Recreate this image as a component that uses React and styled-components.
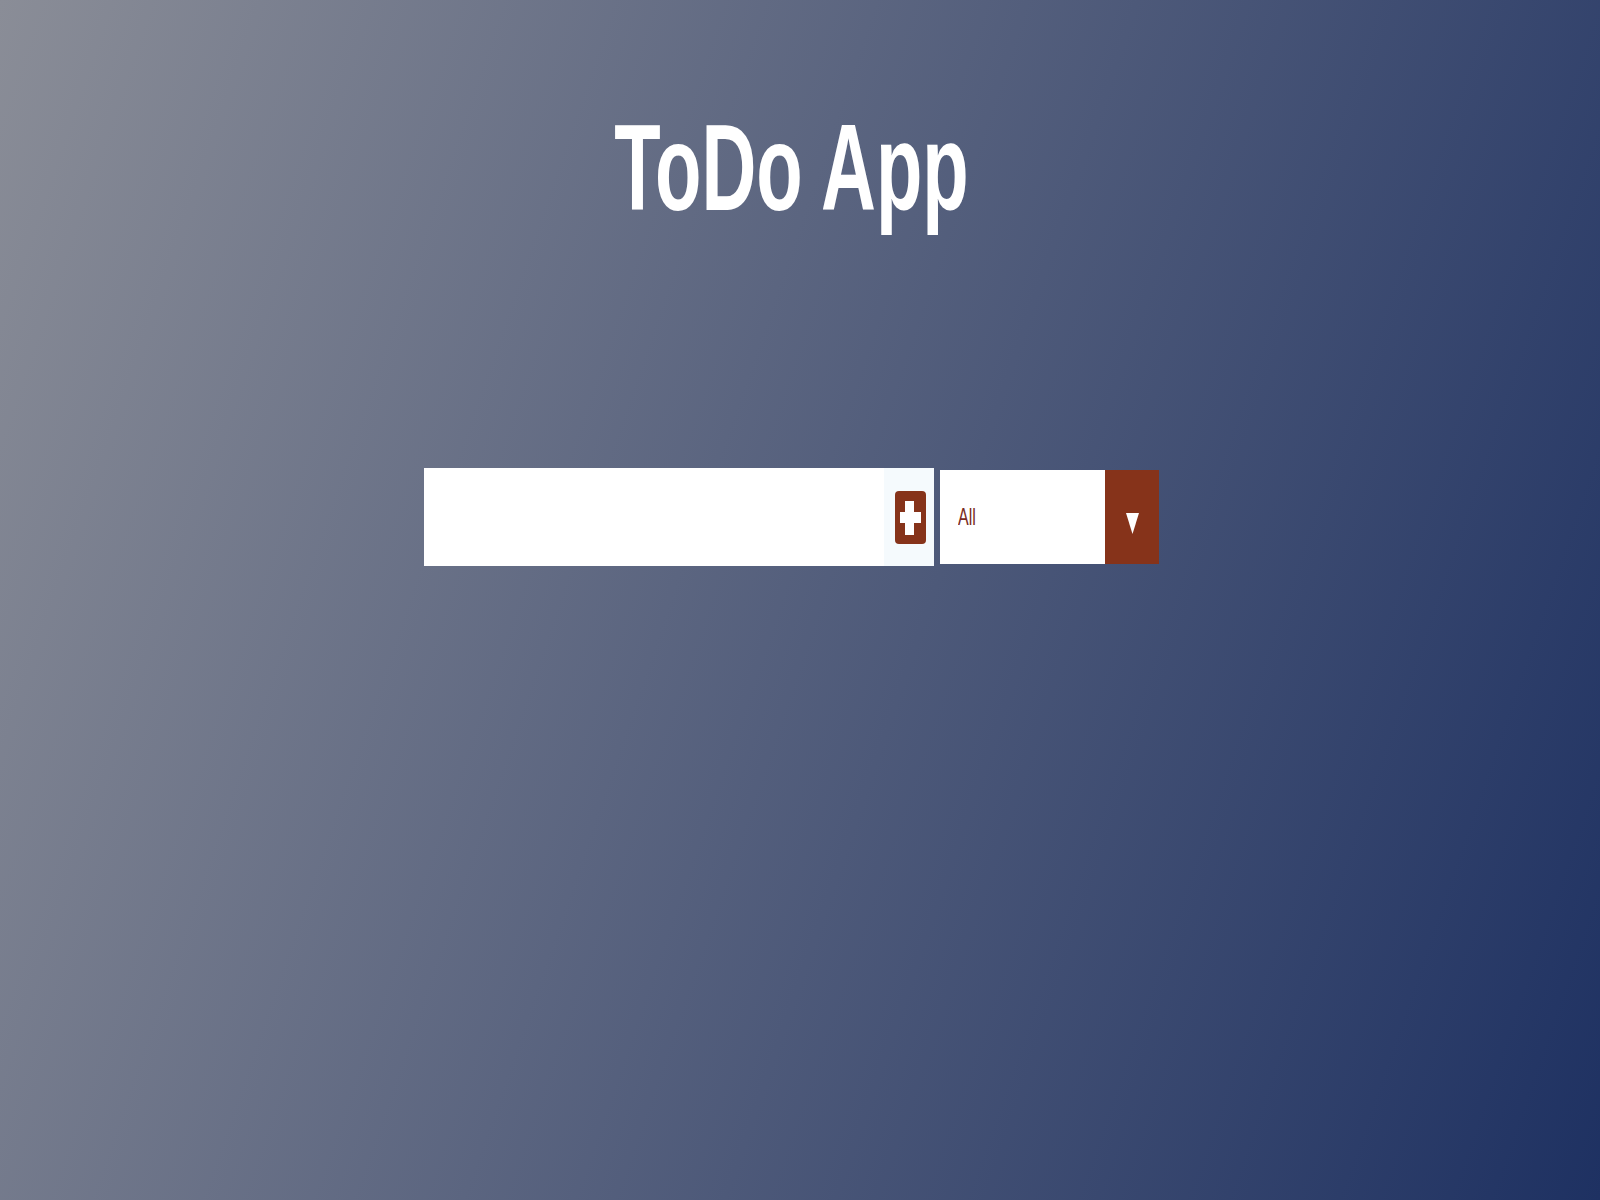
import React, { useState } from "react";
import styled, { createGlobalStyle } from "styled-components";

const GlobalStyle = createGlobalStyle`
    html, body {
        margin: 0;
        padding: 0;
    }
    body {
        font-family: "Liberation Sans", Arial, sans-serif;
    }
    * {
        box-sizing: border-box;
    }
`;

const Page = styled.div`
    min-height: 100vh;
    display: flex;
    flex-direction: column;
    align-items: center;
    padding: 130px 17px 0 0;
    background: linear-gradient(109deg, #8a8d97 0%, #1e3162 100%);
`;

const Title = styled.h1`
    margin: 0;
    font-size: 76px;
    line-height: 76px;
    font-weight: 700;
    color: #fff;
    transform: scaleY(1.62);
`;

const Form = styled.form`
    margin-top: 262px;
    display: flex;
    align-items: center;
    gap: 6px;
`;

const InputWrap = styled.div`
    display: flex;
    width: 510px;
    height: 98px;
    background: #fff;
`;

const TextInput = styled.input`
    flex: 1;
    border: none;
    outline: none;
    padding: 0 16px;
    font-family: inherit;
    font-size: 18px;
    background: transparent;
`;

const AddButton = styled.button`
    width: 50px;
    padding: 0 0 0 2px;
    border: none;
    background: #f5fafd;
    display: flex;
    align-items: center;
    justify-content: center;
    cursor: pointer;
`;

const SelectBox = styled.div`
    display: flex;
    width: 219px;
    height: 94px;
    background: #fff;
    cursor: pointer;
`;

const SelectValue = styled.div`
    flex: 1;
    display: flex;
    align-items: center;
    padding-left: 18px;
    color: #7a2c22;
    font-size: 16px;

    span {
        display: inline-block;
        transform: scaleY(1.5);
    }
`;

const ArrowBox = styled.div`
    width: 54px;
    background: #86331a;
    display: flex;
    align-items: center;
    justify-content: center;

    svg {
        margin-top: 13px;
    }
`;

const BRICK = "#86331a";

function PlusSquare() {
    return (
        <svg width="31" height="53" viewBox="0 0 31 53">
            <rect x="0" y="0" width="31" height="53" rx="4" fill={BRICK} />
            <rect x="10" y="10" width="9" height="34" fill="#fff" />
            <rect x="5" y="21" width="21" height="11" fill="#fff" />
        </svg>
    );
}

function Caret() {
    return (
        <svg width="13" height="21" viewBox="0 0 13 21">
            <polygon points="0,0 13,0 6.5,21" fill="#fff" />
        </svg>
    );
}

export default function App() {
    const [text, setText] = useState("");

    return (
        <>
            <GlobalStyle />
            <Page>
                <Title>ToDo App</Title>
                <Form onSubmit={(e) => e.preventDefault()}>
                    <InputWrap>
                        <TextInput
                            type="text"
                            value={text}
                            onChange={(e) => setText(e.target.value)}
                        />
                        <AddButton type="submit">
                            <PlusSquare />
                        </AddButton>
                    </InputWrap>
                    <SelectBox>
                        <SelectValue>
                            <span>All</span>
                        </SelectValue>
                        <ArrowBox>
                            <Caret />
                        </ArrowBox>
                    </SelectBox>
                </Form>
            </Page>
        </>
    );
}
